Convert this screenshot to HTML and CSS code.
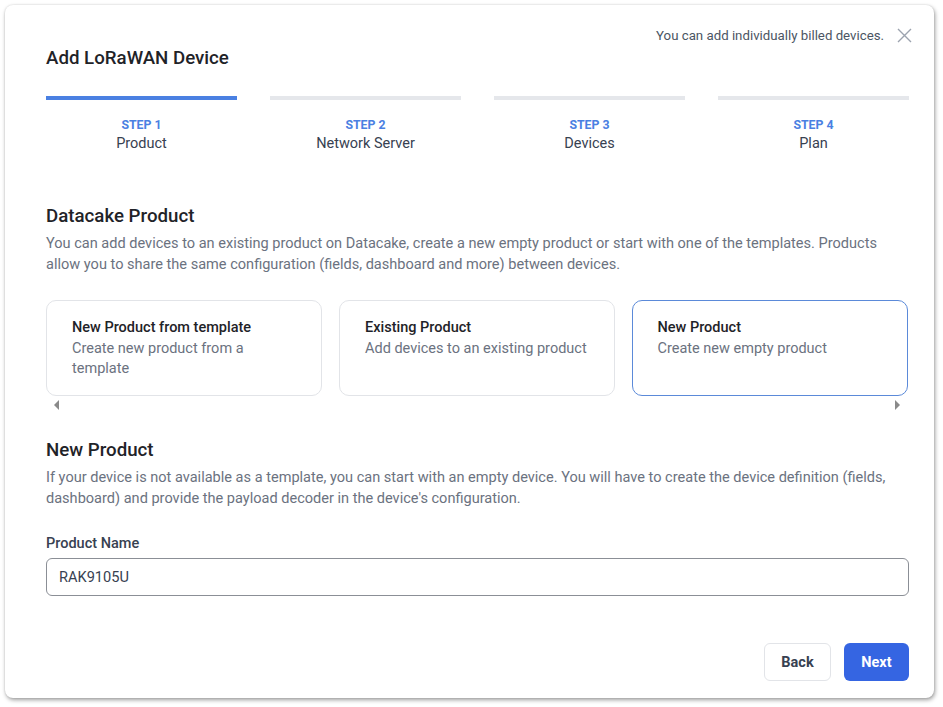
FILE: index.html
```html
<!DOCTYPE html>
<html lang="en">
<head>
<meta charset="utf-8">
<title>Add LoRaWAN Device</title>
<link rel="stylesheet" href="styles.css">
</head>
<body>
<div class="modal">
  <div class="header">
    <h1 class="title">Add LoRaWAN Device</h1>
    <div class="notice">
      <span>You can add individually billed devices.</span>
      <svg class="close" width="15" height="15" viewBox="0 0 15 15"><path d="M1 1L14 14M14 1L1 14" stroke="#9ca3af" stroke-width="1.4" fill="none"/></svg>
    </div>
  </div>

  <div class="steps">
    <div class="step active"><div class="bar"></div><div class="step-num">STEP 1</div><div class="step-name">Product</div></div>
    <div class="step"><div class="bar"></div><div class="step-num">STEP 2</div><div class="step-name">Network Server</div></div>
    <div class="step"><div class="bar"></div><div class="step-num">STEP 3</div><div class="step-name">Devices</div></div>
    <div class="step"><div class="bar"></div><div class="step-num">STEP 4</div><div class="step-name">Plan</div></div>
  </div>

  <h2 class="section-title first">Datacake Product</h2>
  <p class="section-desc">You can add devices to an existing product on Datacake, create a new empty product or start with one of the templates. Products allow you to share the same configuration (fields, dashboard and more) between devices.</p>

  <div class="options">
    <div class="option"><div class="opt-title">New Product from template</div><div class="opt-desc">Create new product from a template</div></div>
    <div class="option"><div class="opt-title">Existing Product</div><div class="opt-desc">Add devices to an existing product</div></div>
    <div class="option selected"><div class="opt-title">New Product</div><div class="opt-desc">Create new empty product</div></div>
  </div>
  <div class="scrollbar">
    <span class="arrow left"></span>
    <span class="arrow right"></span>
  </div>

  <h2 class="section-title second">New Product</h2>
  <p class="section-desc">If your device is not available as a template, you can start with an empty device. You will have to create the device definition (fields, dashboard) and provide the payload decoder in the device's configuration.</p>

  <label class="field-label" for="pname">Product Name</label>
  <input class="field-input" id="pname" type="text" value="RAK9105U">

  <div class="actions">
    <button class="btn btn-back">Back</button>
    <button class="btn btn-next">Next</button>
  </div>
</div>
</body>
</html>
```

FILE: styles.css
```css
* { box-sizing: border-box; }
html, body { margin: 0; padding: 0; background: #ffffff; }
body {
  font-family: Roboto, "Liberation Sans", Arial, sans-serif;
  color: #1f2937;
  width: 943px;
  height: 707px;
  overflow: hidden;
}
.modal {
  margin: 5px 0 0 5px;
  width: 929px;
  height: 693px;
  background: #fff;
  border-radius: 8px;
  box-shadow: 1px 2px 4px rgba(0,0,0,0.38), 0 0 2px rgba(0,0,0,0.12);
  padding: 19px 25px 17px 41px;
  display: flex;
  flex-direction: column;
}
.header {
  display: flex;
  justify-content: space-between;
  align-items: flex-start;
  height: 45px;
}
.title {
  margin: 22px 0 0 0;
  font-size: 18.7px;
  line-height: 24px;
  font-weight: 500;
  color: #1f2328;
}
.notice {
  display: flex;
  align-items: center;
  height: 22px;
  font-size: 13.25px;
  color: #4b5563;
  margin-right: -3px;
}
.close { margin-left: 13px; }

.steps {
  margin-top: 27px;
  display: grid;
  grid-template-columns: repeat(4, 1fr);
  column-gap: 33px;
}
.step { text-align: center; }
.bar { height: 4px; background: #e5e7eb; }
.step.active .bar { background: #4a80e2; }
.step-num {
  margin-top: 17px;
  font-size: 12.3px;
  line-height: 16px;
  font-weight: 700;
  color: #4a80e2;
}
.step-name {
  margin-top: 1px;
  font-size: 14.5px;
  line-height: 20px;
  color: #374151;
}

.section-title {
  margin: 0;
  font-size: 18.7px;
  line-height: 24px;
  font-weight: 500;
  color: #1f2328;
}
.section-title.first { margin-top: 50px; }
.section-title.second { margin-top: 25px; }
.section-desc {
  margin: 6px 0 0 0;
  font-size: 14.55px;
  line-height: 20.5px;
  color: #6b7280;
}

.options {
  margin-top: 25px;
  display: grid;
  grid-template-columns: repeat(3, 276px);
  column-gap: 17px;
}
.option {
  height: 96px;
  border: 1px solid #e2e4e8;
  border-radius: 10px;
  padding: 17px 24px 0 25px;
}
.option.selected { border: 1.5px solid #5b8ad9; padding: 16.5px 24px 0 24.5px; }
.opt-title {
  font-size: 14.5px;
  line-height: 20px;
  font-weight: 500;
  color: #1f2328;
}
.opt-desc {
  margin-top: 1px;
  font-size: 14.5px;
  line-height: 20px;
  color: #6b7280;
}
.scrollbar {
  height: 17px;
  display: flex;
  justify-content: space-between;
  align-items: center;
  padding: 1px 9px 0 8px;
  width: 863px;
}
.arrow { width: 0; height: 0; border-top: 5px solid transparent; border-bottom: 5px solid transparent; }
.arrow.left { border-right: 5px solid #8a8a8a; }
.arrow.right { border-left: 5px solid #8a8a8a; }

.field-label {
  display: block;
  margin-top: 25px;
  font-size: 14.5px;
  line-height: 20px;
  font-weight: 500;
  color: #374151;
}
.field-input {
  margin-top: 4px;
  width: 100%;
  height: 38px;
  border: 1px solid #8b8f96;
  border-radius: 6px;
  padding: 0 12px;
  font-family: Roboto, "Liberation Sans", Arial, sans-serif;
  font-size: 14.6px;
  color: #374151;
  outline: none;
}
.actions {
  margin-top: 47px;
  display: flex;
  justify-content: flex-end;
  gap: 13px;
}
.btn {
  height: 38px;
  border-radius: 6px;
  font-family: Roboto, "Liberation Sans", Arial, sans-serif;
  font-size: 14.5px;
  font-weight: 700;
  padding: 0;
  cursor: pointer;
}
.btn-back {
  width: 67px;
  background: #fff;
  border: 1px solid #e2e4e8;
  color: #374151;
}
.btn-next {
  width: 65px;
  background: #3565e2;
  border: none;
  color: #fff;
}
```
